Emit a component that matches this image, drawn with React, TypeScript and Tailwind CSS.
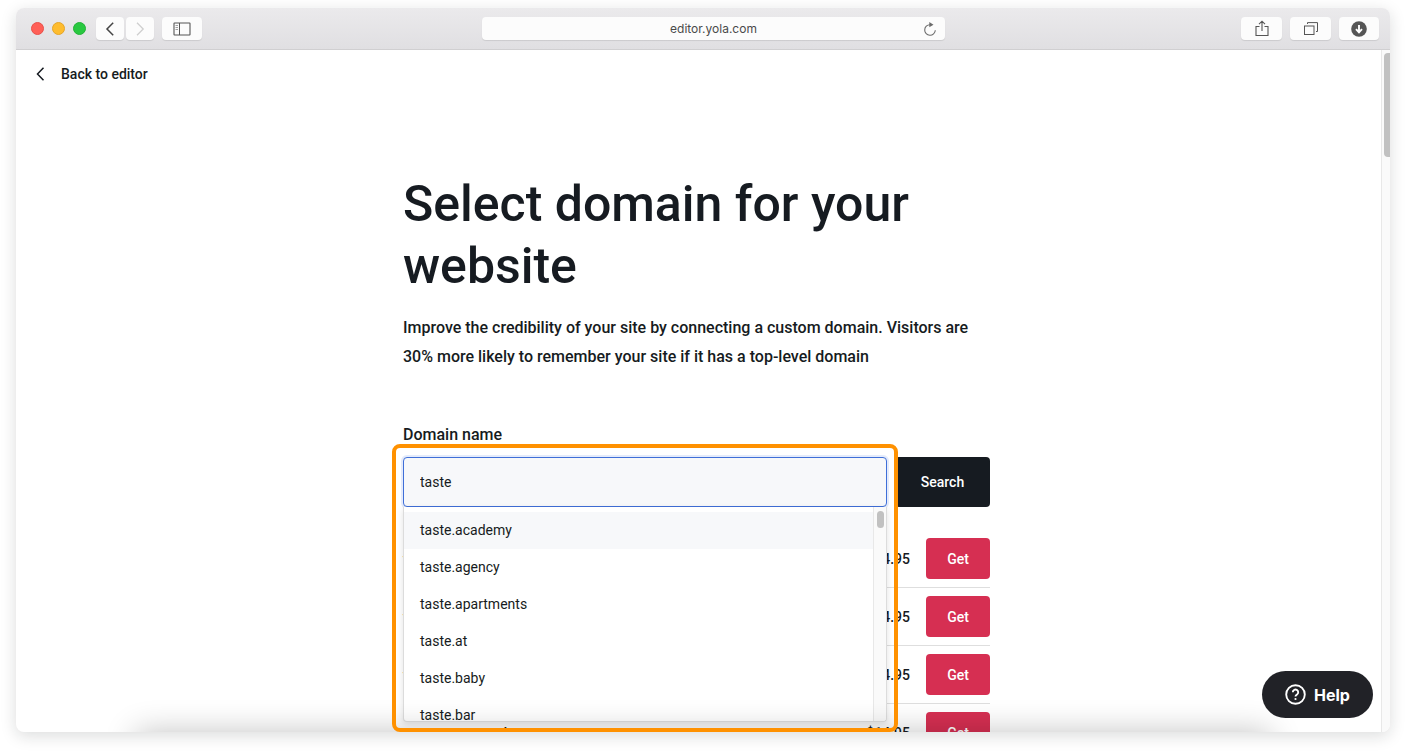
import type { ReactNode } from "react";

const suggestions = [
  "taste.academy",
  "taste.agency",
  "taste.apartments",
  "taste.at",
  "taste.baby",
  "taste.bar",
];

const offers = [
  { name: "taste.fyi", price: "$14.95" },
  { name: "taste.info", price: "$14.95" },
  { name: "taste.life", price: "$14.95" },
  { name: "tastemartspread", price: "$14.95" },
];

function ToolButton({ label, width, children }: { label: string; width: string; children: ReactNode }) {
  return (
    <button
      type="button"
      aria-label={label}
      className={`flex h-[23px] shrink-0 items-center justify-center rounded bg-[#fcfcfc] shadow-[0_1px_1px_rgba(0,0,0,0.1)] ${width}`}
    >
      {children}
    </button>
  );
}

function BrowserBar() {
  return (
    <header className="flex h-[42px] shrink-0 items-center border-b border-[#d0cfd1] bg-linear-to-b from-[#ebeaec] to-[#e0dfe2]">
      <div className="flex flex-1 items-center pl-[15px]">
        <div className="flex gap-2">
          <span className="size-[13px] rounded-full border border-[#e8504a] bg-[#ff5f57]" />
          <span className="size-[13px] rounded-full border border-[#e5a528] bg-[#febc2e]" />
          <span className="size-[13px] rounded-full border border-[#22b236] bg-[#28c840]" />
        </div>
        <div className="ml-2.5 flex gap-[2px]">
          <ToolButton label="Back" width="w-7">
            <svg width="10" height="14" viewBox="0 0 10 14" fill="none" stroke="#444" strokeWidth="1.5">
              <path d="M8.2 .8 2 7l6.200 6.200" />
            </svg>
          </ToolButton>
          <ToolButton label="Forward" width="w-7">
            <svg width="10" height="14" viewBox="0 0 10 14" fill="none" stroke="#cfcfcf" strokeWidth="1.300">
              <path d="M2 .8 8.200 7 2 13.200" />
            </svg>
          </ToolButton>
        </div>
        <div className="ml-2 flex">
          <ToolButton label="Show sidebar" width="w-10">
            <svg width="18" height="14" viewBox="0 0 18 14" fill="none" stroke="#555">
              <rect x="1" y="1" width="16" height="12" rx=".5" strokeWidth="1.100" />
              <path d="M6.500 1v12" />
              <path d="M2.500 3.500h2.500M2.500 5.500h2.500M2.500 7.500h2.500" stroke="#888" strokeWidth=".8" />
            </svg>
          </ToolButton>
        </div>
      </div>
      <div className="ml-[17px] flex h-[23px] w-[463px] min-w-0 items-center rounded bg-[#fcfcfc] pl-[22px] pr-2 shadow-[0_1px_1px_rgba(0,0,0,0.1)]">
        <input
          aria-label="Address"
          defaultValue="editor.yola.com"
          className="w-full min-w-0 bg-transparent text-center font-['Inter',sans-serif] text-xs text-[#4a4a4a] outline-none"
        />
        <button type="button" aria-label="Reload" className="shrink-0 pt-0.5">
          <svg width="14" height="15" viewBox="0 0 14 15" fill="none">
            <path d="M7 2.700a5.300 5.300 0 1 0 5.300 5.600" stroke="#6b6b6b" strokeWidth="1.100" />
            <path d="M6.300 0 10.500 2.700 6.300 5.200z" fill="#6b6b6b" />
          </svg>
        </button>
      </div>
      <div className="flex flex-1 justify-end gap-2 pr-[11px]">
        <ToolButton label="Share" width="w-[41px]">
          <svg width="14" height="17" viewBox="0 0 14 17" fill="none" stroke="#555" strokeWidth="1.100">
            <path d="M4.500 6.500H1v9h12v-9H9.500M7 11V1.200M4 4.200l3-3 3 3" />
          </svg>
        </ToolButton>
        <ToolButton label="Show tabs" width="w-[41px]">
          <svg width="14" height="13" viewBox="0 0 14 13" fill="none" stroke="#555">
            <rect x=".5" y="4" width="9.500" height="8.500" />
            <path d="M3.500 2V.600h10v8.900H12" />
          </svg>
        </ToolButton>
        <ToolButton label="Downloads" width="w-10">
          <svg width="16" height="16" viewBox="0 0 16 16">
            <circle cx="8" cy="8" r="7.800" fill="#555" />
            <path d="M8 4v7M5 8.200l3 3.200 3-3.200" fill="none" stroke="#fff" strokeWidth="1.900" />
          </svg>
        </ToolButton>
      </div>
    </header>
  );
}

function DomainField() {
  return (
    <div className="relative min-w-0 flex-1">
      <input
        id="domain"
        role="combobox"
        aria-expanded="true"
        aria-controls="domain-options"
        defaultValue="taste"
        className="block h-[50px] w-full rounded border border-[#3f6fd8] bg-[#f7f8fa] px-4 text-sm outline-none ring-2 ring-[#e4ebfb]"
      />
      <div className="absolute inset-x-0 top-full z-10 flex h-[215px] overflow-hidden rounded-b border border-t-0 border-[#dcdcdc] bg-white shadow-[0_2px_6px_rgba(0,0,0,0.12)]">
        <ul id="domain-options" role="listbox" className="flex-1 pt-[5px]">
          {suggestions.map((name, index) => (
            <li
              key={name}
              role="option"
              aria-selected={index === 0}
              className="flex h-[37px] items-center px-4 pb-0.5 text-sm aria-selected:bg-[#f7f8fa]"
            >
              {name}
            </li>
          ))}
        </ul>
        <div className="flex w-[13px] justify-center border-l border-[#e8e8e8] bg-[#fafafa] pt-1">
          <span className="h-[17px] w-[7px] rounded-full bg-[#c1c1c1]" />
        </div>
      </div>
      <div className="pointer-events-none absolute -inset-x-[11px] -top-[13px] z-30 h-[288px] rounded-lg border-4 border-[#ff9100]" />
    </div>
  );
}

export default function App() {
  return (
    <div className="h-screen bg-white px-4 pt-2 pb-6 font-['Roboto',sans-serif] text-[#161b21]">
      <div className="flex h-full flex-col overflow-hidden rounded-lg bg-white shadow-[0_4px_16px_rgba(20,30,25,0.15)]">
        <BrowserBar />
        <div className="relative flex min-h-0 flex-1 overflow-hidden">
          <div className="min-w-0 flex-1 overflow-hidden pr-1">
            <nav className="flex h-12 items-center pl-5">
              <a href="#editor" className="flex items-center gap-4 text-sm font-medium">
                <svg width="9" height="14" viewBox="0 0 9 14" fill="none" stroke="#161b21" strokeWidth="1.500">
                  <path d="M7.500 .8 1.500 7l6 6.200" />
                </svg>
                Back to editor
              </a>
            </nav>
            <main className="mx-auto w-full max-w-[587px] pt-[75px]">
              <h1 className="text-[50px] leading-[62px] font-medium">Select domain for your website</h1>
              <p className="mt-4 text-base leading-[29px] font-medium">
                Improve the credibility of your site by connecting a custom domain. Visitors are 30% more likely to
                remember your site if it has a top-level domain
              </p>
              <form className="mt-[52px]" onSubmit={(event) => event.preventDefault()}>
                <label htmlFor="domain" className="block text-base font-medium">
                  Domain name
                </label>
                <div className="mt-2.5 flex gap-2">
                  <DomainField />
                  <button type="submit" className="w-[95px] rounded bg-[#161b21] text-sm font-medium text-white">
                    Search
                  </button>
                </div>
              </form>
              <ul className="mt-[23px]">
                {offers.map((offer) => (
                  <li key={offer.name} className="flex h-[58px] items-center border-b border-[#dedede] text-sm font-medium">
                    <span className="flex-1">{offer.name}</span>
                    <span className="mr-4">{offer.price}</span>
                    <button type="button" className="h-[41px] w-16 rounded bg-[#d62f52] text-white">
                      Get
                    </button>
                  </li>
                ))}
              </ul>
            </main>
          </div>
          <div className="flex w-[9px] shrink-0 justify-end border-l border-[#e8e8e8] bg-[#fafafa] pt-[3px]">
            <span className="h-[104px] w-[6px] rounded-l bg-[#c1c1c1]" />
          </div>
          <div className="pointer-events-none absolute inset-x-[120px] top-full z-20 h-10 shadow-[0_0_32px_rgba(0,0,0,0.24)]" />
          <button
            type="button"
            className="absolute right-[17px] bottom-[14px] z-30 flex h-[47px] w-[111px] items-center justify-center gap-2 rounded-full bg-[#212227] font-['Inter',sans-serif] text-base font-bold text-white"
          >
            <svg width="21" height="21" viewBox="0 0 21 21" fill="none" stroke="currentColor" strokeWidth="1.900">
              <circle cx="10.500" cy="10.500" r="9.300" />
              <path d="M7.800 8.300a2.700 2.700 0 1 1 4.200 2.200c-.9.600-1.500 1-1.500 2" />
              <circle cx="10.500" cy="15" r="1.100" fill="currentColor" stroke="none" />
            </svg>
            Help
          </button>
        </div>
      </div>
    </div>
  );
}
